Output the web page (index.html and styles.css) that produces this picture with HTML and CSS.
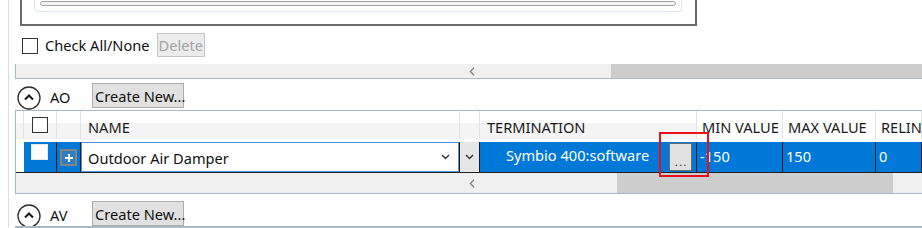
FILE: index.html
```html
<!DOCTYPE html>
<html>
<head>
<meta charset="utf-8">
<link rel="stylesheet" href="styles.css">
</head>
<body>
<div class="page">
  <div class="topbox"><div class="inner"><div class="track"></div></div></div>

  <div class="checkrow">
    <span class="cb"></span>
    <span class="lbl">Check All/None</span>
    <button class="btn btn-disabled">Delete</button>
  </div>

  <div class="grid grid1">
    <div class="hscroll hs1">
      <div class="hs-left"></div>
      <div class="hs-arrow"><svg width="6" height="9" viewBox="0 0 6 9"><path d="M5 0.8 L1.4 4.5 L5 8.2" fill="none" stroke="#858585" stroke-width="1.4"/></svg></div>
      <div class="hs-gap"></div>
      <div class="hs-thumb"></div>
    </div>
  </div>

  <div class="sec">
    <svg class="collapse" width="24" height="24" viewBox="0 0 24 24"><circle cx="12" cy="12" r="11" fill="#fff" stroke="#2b2b2b" stroke-width="1.3"/><path d="M8 13.6 L12 9.6 L16 13.6" fill="none" stroke="#1a1a1a" stroke-width="2.1"/></svg>
    <span class="sec-name">AO</span>
    <button class="btn btn-create">Create New...</button>
  </div>

  <div class="grid grid2">
    <div class="dg dg-head">
      <div class="rh"></div>
      <div class="hc c-chk"><span class="cb"></span></div>
      <div class="hc"></div>
      <div class="hc">NAME</div>
      <div class="hc"></div>
      <div class="hc">TERMINATION</div>
      <div class="hc hc-w">MIN VALUE</div>
      <div class="hc hc-w">MAX VALUE</div>
      <div class="hc hc-w">RELIN</div>
    </div>
    <div class="dg dg-row">
      <div class="rh"></div>
      <div class="dc c-chk"><span class="cb cb-row"></span></div>
      <div class="dc c-exp"><span class="expander"><svg width="10" height="10" viewBox="0 0 10 10"><path d="M5 1 V9 M1 5 H9" stroke="#fff" stroke-width="2"/></svg></span></div>
      <div class="dc c-name">
        <div class="combo">
          <span>Outdoor Air Damper</span>
          <svg width="9" height="6" viewBox="0 0 9 6"><path d="M1 1 L4.5 4.5 L8 1" fill="none" stroke="#3a3a3a" stroke-width="1.5"/></svg>
        </div>
      </div>
      <div class="dc c-dd"><svg width="9" height="6" viewBox="0 0 9 6"><path d="M1 1 L4.5 4.5 L8 1" fill="none" stroke="#3a3a3a" stroke-width="1.5"/></svg></div>
      <div class="dc c-term"><span class="term-text">Symbio 400:software</span><span class="ellipsis">. . .</span></div>
      <div class="dc">-150</div>
      <div class="dc">150</div>
      <div class="dc">0</div>
    </div>
    <div class="hscroll hs2">
      <div class="hs-left"></div>
      <div class="hs-arrow"><svg width="6" height="9" viewBox="0 0 6 9"><path d="M5 0.8 L1.4 4.5 L5 8.2" fill="none" stroke="#858585" stroke-width="1.4"/></svg></div>
      <div class="hs-gap"></div>
      <div class="hs-thumb"></div>
      <div class="hs-rest"></div>
    </div>
  </div>

  <div class="sec sec-av">
    <svg class="collapse" width="24" height="24" viewBox="0 0 24 24"><circle cx="12" cy="12" r="11" fill="#fff" stroke="#2b2b2b" stroke-width="1.3"/><path d="M8 13.6 L12 9.6 L16 13.6" fill="none" stroke="#1a1a1a" stroke-width="2.1"/></svg>
    <span class="sec-name">AV</span>
    <button class="btn btn-create">Create New...</button>
  </div>

  <div class="grid grid3"></div>
</div>
<div class="callout"></div>
</body>
</html>
```

FILE: styles.css
```css
* { box-sizing: border-box; }

html, body {
  margin: 0;
  padding: 0;
  background: #fff;
}

body {
  width: 922px;
  height: 228px;
  overflow: hidden;
  position: relative;
  font-family: "Noto Sans", "Open Sans", sans-serif;
  font-size: 14.6px;
  color: #111;
}

.page {
  margin-left: 8px;
  border-left: 1px solid #dcdcdc;
  height: 228px;
  display: flex;
  flex-direction: column;
}

/* top list box (clipped) */
.topbox {
  margin-left: 11px;
  width: 677px;
  height: 26px;
  flex: none;
  border: 2px solid #6a6a6a;
  border-top: none;
  padding: 0 13px 0 12px;
}
.topbox .inner {
  height: 12px;
  border: 1px solid #dfe6ee;
  border-top: none;
  border-radius: 0 0 4px 4px;
  padding: 1px 5px 0 5px;
}
.topbox .track {
  height: 5px;
  border: 1px solid #9e9ea8;
  border-radius: 3px;
  background: #f4f4f4;
}

/* check all row */
.checkrow {
  margin-top: 7px;
  height: 24px;
  flex: none;
  display: flex;
  align-items: center;
  padding-left: 13px;
}
.cb {
  display: inline-block;
  width: 16px;
  height: 16px;
  border: 1px solid #333;
  background: #fff;
  flex: none;
}
.checkrow .cb { margin-top: 2px; }
.lbl {
  margin-left: 7px;
  line-height: 24px;
}
.btn {
  font-family: inherit;
  font-size: 14.6px;
  height: 25px;
  padding: 0 1px;
  margin: 0;
  border: 1px solid #adadad;
  background: #e1e1e1;
  color: #111;
  line-height: 22px;
  white-space: nowrap;
}
.btn-disabled {
  margin-left: 7px;
  height: 24px;
  width: 48px;
  border-color: #c4c4c4;
  background: #ececec;
  color: #a3a3a3;
}

/* grids */
.grid {
  margin-left: 6px;
  border-left: 1px solid #a9b8c7;
  flex: none;
}
.grid1 {
  margin-top: 7px;
  border-bottom: 1px solid #a9b8c7;
}
.grid2 {
  border-top: 1px solid #a9b8c7;
  border-bottom: 1px solid #a9b8c7;
}
.grid3 {
  border-top: 2px solid #a9b8c7;
  height: 2px;
}

.hscroll {
  display: flex;
  background: #f0f0f0;
}
.hs1 { height: 14px; }
.hs2 { height: 20px; }
.hs-left { width: 447px; flex: none; }
.hs-arrow {
  width: 17px;
  flex: none;
  display: flex;
  align-items: center;
  justify-content: center;
}
.hs-gap { flex: none; }
.hs1 .hs-gap { width: 131px; }
.hs2 .hs-gap { width: 137px; }
.hs-thumb { background: #cdcdcd; }
.hs1 .hs-thumb { flex: 1; }
.hs2 .hs-thumb { width: 276px; flex: none; }
.hs-rest { flex: 1; }

/* section header rows */
.sec {
  height: 31px;
  flex: none;
  display: flex;
  align-items: flex-start;
  padding-top: 4px;
  padding-left: 8px;
}
.sec .collapse {
  margin-top: 3px;
  flex: none;
}
.sec-name {
  margin-left: 9px;
  width: 42px;
  line-height: 25px;
  margin-top: 2px;
}
.btn-create { width: 92px; text-align: left; padding-left: 2px; }
.sec-av {
  padding-top: 7px;
  height: 32px;
}

/* datagrid */
.dg {
  display: grid;
  grid-template-columns: 8px 33px 24px 379px 20px 217px 86px 93px 46px;
}
.dg-head {
  height: 31px;
  background: linear-gradient(#ffffff 0, #ffffff 12px, #f4f4f4 12px, #f4f4f4 28px, #ffffff 28px);
}
.hc {
  border-right: 1px solid #e2e2e2;
  padding-left: 7px;
  padding-top: 3px;
  height: 28px;
  line-height: 26px;
  white-space: nowrap;
  overflow: hidden;
  color: #1a1a1a;
}
.hc-w { background: #fff; padding-left: 5px; }
.hc.c-chk {
  padding-left: 8px;
  padding-top: 6px;
  line-height: 0;
}
.dg-head .rh { border-right: 1px solid #e2e2e2; height: 28px; }

.dg-row {
  height: 31px;
  border-bottom: 1px solid #202020;
}
.dg-row .rh { background: #fff; }
.dc {
  background: #0078d7;
  border-right: 1px solid #1b1b1b;
  color: #fff;
  padding-left: 3px;
  line-height: 28px;
  white-space: nowrap;
  overflow: hidden;
  height: 30px;
}
.dc.c-chk { padding: 2px 0 0 7px; line-height: 0; }
.cb-row { border-color: #e8e8e8; width: 17px; height: 16px; }
.dc.c-exp { padding: 7px 0 0 3px; line-height: 0; }
.expander {
  display: inline-flex;
  align-items: center;
  justify-content: center;
  width: 17px;
  height: 17px;
  border: 2px solid #848484;
  background: #2d7fc4;
}
.dc.c-name { padding: 0; background: #0078d7; }
.combo {
  height: 30px;
  background: #fff;
  border: 1px solid #4f95d6;
  color: #111;
  display: flex;
  align-items: center;
  justify-content: space-between;
  padding: 0 8px 0 6px;
}
.combo span { line-height: 28px; margin-top: 2px; }
.dc.c-dd {
  background: #e6e6e6;
  padding: 0;
  display: flex;
  align-items: center;
  justify-content: center;
}
.dc.c-term {
  padding-left: 26px;
  display: flex;
  align-items: flex-start;
}
.term-text { line-height: 27px; flex: 1; }
.ellipsis {
  flex: none;
  width: 23px;
  height: 28px;
  margin-top: 1px;
  margin-right: 4px;
  background: #e1e1e1;
  border: 1px solid #6b6b6b;
  color: #222;
  font-size: 10px;
  line-height: 36px;
  text-align: center;
  letter-spacing: 0;
  word-spacing: -1px;
}

/* annotation overlay */
.callout {
  position: absolute;
  left: 659px;
  top: 132px;
  width: 50px;
  height: 45px;
  border: 2px solid #e8111b;
}
```
